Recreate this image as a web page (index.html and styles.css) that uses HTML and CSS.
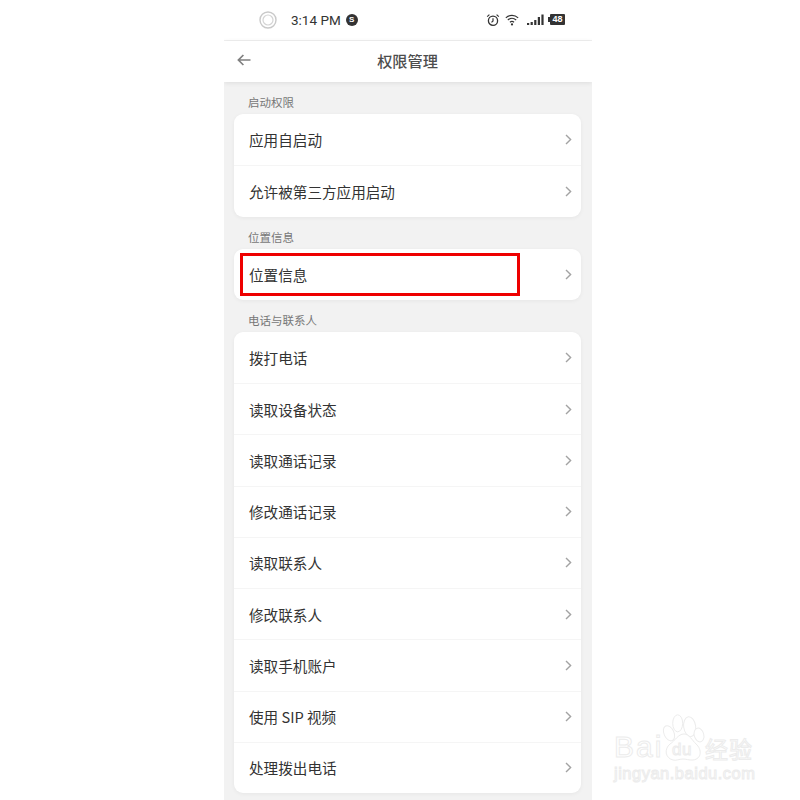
FILE: index.html
```html
<!DOCTYPE html>
<html lang="zh">
<head>
<meta charset="utf-8">
<title>权限管理</title>
<link rel="stylesheet" href="styles.css">
</head>
<body>
<div class="phone">
  <div class="status">
    <div class="status-left">
      <svg class="rec" width="18" height="18" viewBox="0 0 18 18"><circle cx="9" cy="9" r="8" fill="none" stroke="#c9c9c9" stroke-width="1.4"/><circle cx="9" cy="9" r="5" fill="none" stroke="#d4d4d4" stroke-width="1.2"/></svg>
      <span class="time">3:14 PM</span>
      <span class="badge">S</span>
    </div>
    <div class="status-right">
      <svg width="14" height="14" viewBox="0 0 14 14"><circle cx="7" cy="7.8" r="4.6" fill="none" stroke="#333" stroke-width="1.3"/><path d="M7 5.2V8L5.500 9.400M1.200 3.600 3.400 1.600M12.800 3.600 10.600 1.600" fill="none" stroke="#333" stroke-width="1.2"/></svg>
      <svg width="14" height="12" viewBox="0 0 14 12"><path d="M.8 3.800C4.400.6 9.600.6 13.200 3.800M2.800 6C5.300 3.900 8.700 3.900 11.200 6M4.900 8.200C6.200 7.200 7.800 7.200 9.100 8.200" fill="none" stroke="#333" stroke-width="1.1"/><circle cx="7" cy="10.4" r="1.1" fill="#333"/></svg>
      <svg class="signal" width="18" height="12" viewBox="0 0 18 12"><path d="M0 9h2.200v2H0zM3.600 8h2.200v3H3.600zM7.200 6h2.200v5H7.200zM10.800 3h2.200v8h-2.200zM14.400.5h2.200V11h-2.200z" fill="#333"/></svg>
      <span class="battery"><span class="battery-tip"></span><span class="battery-num">48</span></span>
    </div>
  </div>
  <div class="header">
    <svg class="back" width="14" height="12" viewBox="0 0 14 12"><path d="M13.500 6H1.500M6.400 1 1.400 6l5 5" fill="none" stroke="#808080" stroke-width="1.7"/></svg>
    <span class="title">权限管理</span>
  </div>
  <div class="content">
    <div class="section-label first">启动权限</div>
    <div class="card">
      <div class="row"><span>应用自启动</span><svg class="chev" width="7" height="11" viewBox="0 0 7 11"><path d="M1 1l4.600 4.500L1 10" fill="none" stroke="#a3a3a3" stroke-width="1.4"/></svg></div>
      <div class="row"><span>允许被第三方应用启动</span><svg class="chev" width="7" height="11" viewBox="0 0 7 11"><path d="M1 1l4.600 4.500L1 10" fill="none" stroke="#a3a3a3" stroke-width="1.4"/></svg></div>
    </div>
    <div class="section-label">位置信息</div>
    <div class="card">
      <div class="row"><span>位置信息</span><svg class="chev" width="7" height="11" viewBox="0 0 7 11"><path d="M1 1l4.600 4.500L1 10" fill="none" stroke="#a3a3a3" stroke-width="1.4"/></svg></div>
      <div class="highlight"></div>
    </div>
    <div class="section-label">电话与联系人</div>
    <div class="card">
      <div class="row"><span>拨打电话</span><svg class="chev" width="7" height="11" viewBox="0 0 7 11"><path d="M1 1l4.600 4.500L1 10" fill="none" stroke="#a3a3a3" stroke-width="1.4"/></svg></div>
      <div class="row"><span>读取设备状态</span><svg class="chev" width="7" height="11" viewBox="0 0 7 11"><path d="M1 1l4.600 4.500L1 10" fill="none" stroke="#a3a3a3" stroke-width="1.4"/></svg></div>
      <div class="row"><span>读取通话记录</span><svg class="chev" width="7" height="11" viewBox="0 0 7 11"><path d="M1 1l4.600 4.500L1 10" fill="none" stroke="#a3a3a3" stroke-width="1.4"/></svg></div>
      <div class="row"><span>修改通话记录</span><svg class="chev" width="7" height="11" viewBox="0 0 7 11"><path d="M1 1l4.600 4.500L1 10" fill="none" stroke="#a3a3a3" stroke-width="1.4"/></svg></div>
      <div class="row"><span>读取联系人</span><svg class="chev" width="7" height="11" viewBox="0 0 7 11"><path d="M1 1l4.600 4.500L1 10" fill="none" stroke="#a3a3a3" stroke-width="1.4"/></svg></div>
      <div class="row"><span>修改联系人</span><svg class="chev" width="7" height="11" viewBox="0 0 7 11"><path d="M1 1l4.600 4.500L1 10" fill="none" stroke="#a3a3a3" stroke-width="1.4"/></svg></div>
      <div class="row"><span>读取手机账户</span><svg class="chev" width="7" height="11" viewBox="0 0 7 11"><path d="M1 1l4.600 4.500L1 10" fill="none" stroke="#a3a3a3" stroke-width="1.4"/></svg></div>
      <div class="row"><span>使用 SIP 视频</span><svg class="chev" width="7" height="11" viewBox="0 0 7 11"><path d="M1 1l4.600 4.500L1 10" fill="none" stroke="#a3a3a3" stroke-width="1.4"/></svg></div>
      <div class="row"><span>处理拨出电话</span><svg class="chev" width="7" height="11" viewBox="0 0 7 11"><path d="M1 1l4.600 4.500L1 10" fill="none" stroke="#a3a3a3" stroke-width="1.4"/></svg></div>
    </div>
  </div>
</div>
<div class="watermark">
  <svg class="paw" width="44" height="48" viewBox="0 0 44 48">
    <g fill="#fff" stroke="#ececec" stroke-width="1">
      <ellipse cx="7" cy="19.300" rx="5" ry="8" transform="rotate(-25 7 19.300)"/>
      <ellipse cx="15.700" cy="9.300" rx="5" ry="8.500"/>
      <ellipse cx="27.700" cy="12.700" rx="6" ry="10" transform="rotate(-8 27.700 12.700)"/>
      <ellipse cx="37" cy="21" rx="4.800" ry="7" transform="rotate(-15 37 21)"/>
      <path d="M22 20c5 0 8 6 12 10 6 5 6 15-3 16-4 .3-7-1-10-1-4 0-7 2-10 1-8-2-9-11-3-16 5-3 8-10 14-10z"/>
    </g>
  </svg>
  <span class="wm-bai">Bai</span><span class="wm-du">du</span><span class="wm-cn">经验</span>
  <span class="wm-url">jingyan.baidu.com</span>
</div>
</body>
</html>
```
FILE: styles.css
```css
* { box-sizing: border-box; }
html, body { margin: 0; height: 800px; overflow: hidden; background: #fff; }
body { position: relative; font-family: "Noto Sans CJK SC", "Liberation Sans", sans-serif; }
.phone { width: 368px; height: 800px; margin-left: 224px; overflow: hidden; background: #f2f2f2; display: flex; flex-direction: column; }
.status { height: 41px; background: #fff; border-bottom: 1px solid #f0f0f0; display: flex; align-items: center; justify-content: space-between; padding: 0 27px 1px 35px; flex: none; }
.status-left { display: flex; align-items: center; }
.time { font-family: "Roboto", "Liberation Sans", sans-serif; font-size: 13.500px; color: #333; margin-left: 14px; }
.badge { width: 12px; height: 12px; border-radius: 50%; background: #333; color: #fff; font: bold 8px/12px "Liberation Sans", sans-serif; text-align: center; margin-left: 5px; }
.status-right { display: flex; align-items: center; gap: 5px; }
.signal { margin-left: 3px; margin-right: -2px; }
.battery { display: flex; align-items: center; }
.battery-tip { width: 2px; height: 5px; background: #333; }
.battery-num { width: 15px; height: 11px; background: #333; color: #fff; font: bold 9px/11px "Liberation Sans", sans-serif; text-align: center; border-radius: 1px; }
.header { height: 41px; background: #fff; position: relative; display: flex; align-items: center; justify-content: center; flex: none; box-shadow: 0 1px 5px rgba(0,0,0,.09); z-index: 1; }
.back { position: absolute; left: 13px; top: 13px; }
.title { font-size: 15.200px; color: #4d4d4d; font-weight: 500; padding-bottom: 3px; margin-left: -1px; }
.content { padding: 0 11px 0 10px; flex: 1; }
.section-label { font-size: 11.500px; line-height: 16px; color: #777; padding-left: 14px; margin: 12px 0 4px; }
.card { background: #fff; border-radius: 9px; box-shadow: 0 1px 4px rgba(0,0,0,.05); position: relative; }
.row { height: 51.250px; display: flex; align-items: center; justify-content: space-between; padding: 0 9px 0 15px; font-size: 14.600px; color: #333; border-top: 1px solid #f5f5f5; }
.row:first-child { border-top: none; }
.chev { margin-top: 0; }
.highlight { position: absolute; left: 6px; top: 4px; width: 280px; height: 43px; border: 3px solid #ee0000; }
.watermark { position: absolute; left: 614px; top: 714px; width: 150px; height: 70px; }
.paw { position: absolute; left: 48px; top: 0; }
.wm-bai, .wm-du, .wm-cn, .wm-url { position: absolute; color: #fff; -webkit-text-stroke: 1px #ececec; font-family: "Liberation Sans", sans-serif; }
.wm-bai { left: 0; top: 17px; font-size: 30px; line-height: 32px; letter-spacing: 2px; }
.wm-du { left: 58px; top: 27px; font-size: 17px; line-height: 18px; letter-spacing: .5px; }
.wm-cn { left: 91px; top: 20px; font-size: 23px; line-height: 28px; font-family: "Noto Sans CJK SC", sans-serif; letter-spacing: 1px; }
.wm-url { left: 0; top: 50px; font-size: 16.500px; line-height: 18px; letter-spacing: .5px; white-space: nowrap; }
```
